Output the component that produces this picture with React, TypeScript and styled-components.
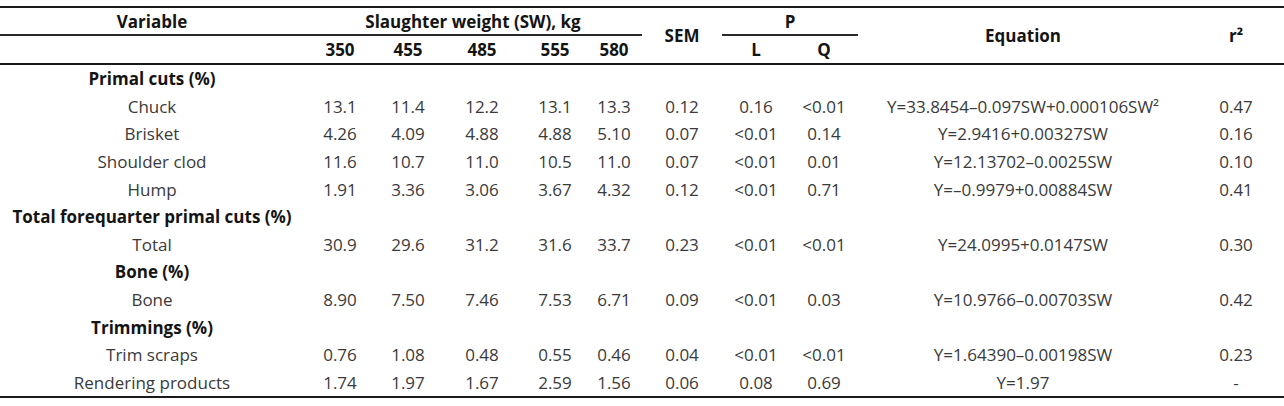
import styled, { createGlobalStyle } from "styled-components";

const GlobalStyle = createGlobalStyle`
  body {
    margin: 0;
    background: #ffffff;
    font-family: "Open Sans", "DejaVu Sans", sans-serif;
  }
`;

const Table = styled.table`
  width: 1284px;
  margin-top: 6px;
  border-collapse: collapse;
  table-layout: fixed;
  border-top: 2px solid #1a1a1a;
  border-bottom: 2px solid #1a1a1a;
  font-size: 17px;
  color: #3a3a3a;
`;

const HeadCell = styled.th<{ $line?: boolean; $bottom?: boolean; $h?: number }>`
  padding: 0;
  height: ${(p) => p.$h ?? 26}px;
  font-weight: 700;
  color: #141414;
  text-align: center;
  vertical-align: middle;
  border-bottom: ${(p) => (p.$line ? "2px solid #2a2a2a" : p.$bottom ? "2px solid #1a1a1a" : "none")};
`;

const Cell = styled.td<{ $section?: boolean }>`
  padding: 0;
  height: 27.6px;
  text-align: center;
  vertical-align: middle;
  white-space: nowrap;
  font-weight: ${(p) => (p.$section ? 700 : 400)};
  color: ${(p) => (p.$section ? "#141414" : "#3a3a3a")};
`;

const widths = [304, 72, 64, 84, 62, 56, 80, 68, 68, 330, 96];

type Row = { label: string; section?: boolean; values?: string[] };

const rows: Row[] = [
  { label: "Primal cuts (%)", section: true },
  { label: "Chuck", values: ["13.1", "11.4", "12.2", "13.1", "13.3", "0.12", "0.16", "<0.01", "Y=33.8454–0.097SW+0.000106SW²", "0.47"] },
  { label: "Brisket", values: ["4.26", "4.09", "4.88", "4.88", "5.10", "0.07", "<0.01", "0.14", "Y=2.9416+0.00327SW", "0.16"] },
  { label: "Shoulder clod", values: ["11.6", "10.7", "11.0", "10.5", "11.0", "0.07", "<0.01", "0.01", "Y=12.13702–0.0025SW", "0.10"] },
  { label: "Hump", values: ["1.91", "3.36", "3.06", "3.67", "4.32", "0.12", "<0.01", "0.71", "Y=–0.9979+0.00884SW", "0.41"] },
  { label: "Total forequarter primal cuts (%)", section: true },
  { label: "Total", values: ["30.9", "29.6", "31.2", "31.6", "33.7", "0.23", "<0.01", "<0.01", "Y=24.0995+0.0147SW", "0.30"] },
  { label: "Bone (%)", section: true },
  { label: "Bone", values: ["8.90", "7.50", "7.46", "7.53", "6.71", "0.09", "<0.01", "0.03", "Y=10.9766–0.00703SW", "0.42"] },
  { label: "Trimmings (%)", section: true },
  { label: "Trim scraps", values: ["0.76", "1.08", "0.48", "0.55", "0.46", "0.04", "<0.01", "<0.01", "Y=1.64390–0.00198SW", "0.23"] },
  { label: "Rendering products", values: ["1.74", "1.97", "1.67", "2.59", "1.56", "0.06", "0.08", "0.69", "Y=1.97", "-"] },
];

const weights = ["350", "455", "485", "555", "580"];

export default function App() {
  return (
    <>
      <GlobalStyle />
      <Table>
        <colgroup>
          {widths.map((w, i) => (
            <col key={i} style={{ width: w }} />
          ))}
        </colgroup>
        <thead>
          <tr>
            <HeadCell $line>Variable</HeadCell>
            <HeadCell $line colSpan={5}>Slaughter weight (SW), kg</HeadCell>
            <HeadCell rowSpan={2} $bottom>SEM</HeadCell>
            <HeadCell $line colSpan={2}>P</HeadCell>
            <HeadCell rowSpan={2} $bottom>Equation</HeadCell>
            <HeadCell rowSpan={2} $bottom>r²</HeadCell>
          </tr>
          <tr>
            <HeadCell $bottom $h={27} />
            {weights.map((w) => (
              <HeadCell key={w} $bottom $h={27}>{w}</HeadCell>
            ))}
            <HeadCell $bottom $h={27}>L</HeadCell>
            <HeadCell $bottom $h={27}>Q</HeadCell>
          </tr>
        </thead>
        <tbody>
          {rows.map((r) =>
            r.section ? (
              <tr key={r.label}>
                <Cell $section>{r.label}</Cell>
                <Cell colSpan={10} />
              </tr>
            ) : (
              <tr key={r.label}>
                <Cell>{r.label}</Cell>
                {r.values!.map((v, i) => (
                  <Cell key={i}>{v}</Cell>
                ))}
              </tr>
            )
          )}
        </tbody>
      </Table>
    </>
  );
}
